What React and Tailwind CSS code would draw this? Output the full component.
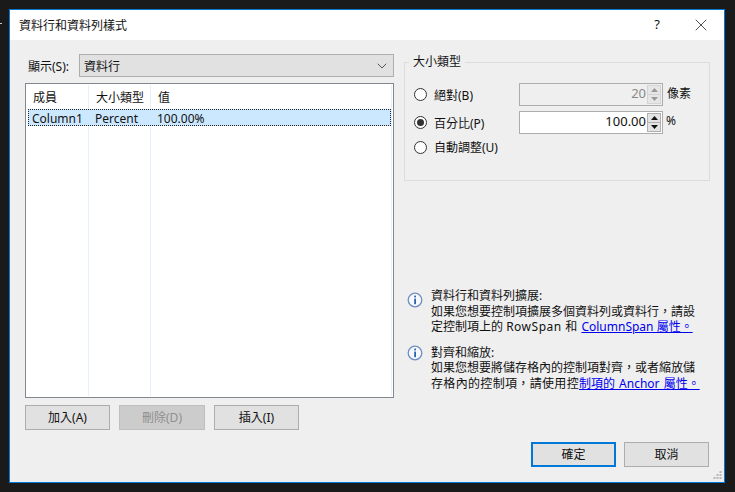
import { ChevronDown, X } from "lucide-react";

const font = {
  fontFamily: '"Noto Sans", "Noto Sans CJK TC", sans-serif',
};

function Radio({ label, checked }) {
  return (
    <div className="flex h-[20px] items-center gap-[7px]">
      <span className="flex h-[13px] w-[13px] items-center justify-center rounded-full border border-[#333] bg-white">
        {checked && <span className="h-[7px] w-[7px] rounded-full bg-[#333]" />}
      </span>
      <span className="translate-y-[1px]">{label}</span>
    </div>
  );
}

function Spin({ value, disabled }) {
  const arrow = disabled ? "#999" : "#111";
  const part = disabled
    ? "border-[#d4d4d4] bg-[#e6e6e6]"
    : "border-[#b0b0b0] bg-[#e3e3e3]";
  return (
    <div
      className={
        disabled
          ? "flex h-[23px] w-[144px] items-center justify-end border border-[#adadad] bg-[#efefef] pr-[1px] text-[#8a8a8a]"
          : "flex h-[23px] w-[144px] items-center justify-end border border-[#adadad] bg-white pr-[1px] text-[#111]"
      }
    >
      <span className="mr-[1px] -translate-y-[1px] text-[13px]">{value}</span>
      <div className="flex h-[19px] w-[14px] flex-col">
        <div className={`flex h-[10px] items-center justify-center border ${part}`}>
          <svg width="7" height="4" viewBox="0 0 7 4">
            <path d="M3.5 0 L7 4 H0 Z" fill={arrow} />
          </svg>
        </div>
        <div className={`flex h-[9px] items-center justify-center border border-t-0 ${part}`}>
          <svg width="7" height="4" viewBox="0 0 7 4">
            <path d="M0 0 H7 L3.5 4 Z" fill={arrow} />
          </svg>
        </div>
      </div>
    </div>
  );
}

function Btn({ children, disabled, primary, className = "" }) {
  let look = "border border-[#adadad] bg-[#e1e1e1] text-[#111]";
  if (disabled) look = "border border-[#bfbfbf] bg-[#cccccc] text-[#8f8f8f]";
  if (primary) look = "border-2 border-[#0078d7] bg-[#e1e1e1] text-[#111]";
  return (
    <button className={`flex h-[25px] items-center justify-center ${look} ${className}`}>
      {children}
    </button>
  );
}

function InfoIcon() {
  return (
    <svg width="16" height="16" viewBox="0 0 16 16" className="shrink-0">
      <circle cx="8" cy="8" r="6.8" fill="#f7f9fd" stroke="#6d8fc4" strokeWidth="1.3" />
      <rect x="7.2" y="3.6" width="1.8" height="1.8" fill="#2f62ad" />
      <rect x="7.2" y="6.6" width="1.8" height="5.6" fill="#2f62ad" />
    </svg>
  );
}

function Note({ title, iconClass, children }) {
  return (
    <div className="flex gap-[8px] pl-[3px]">
      <div className={iconClass}>
        <InfoIcon />
      </div>
      <div className="w-[272px] leading-[15.5px] text-[#111]">
        <div>{title}</div>
        {children}
      </div>
    </div>
  );
}

export default function App() {
  return (
    <div
      className="relative h-[492px] w-[735px] overflow-hidden bg-[#1a1a1a] pl-[9px] pt-[9px] text-[12px] text-[#111]"
      style={font}
    >
      <span className="absolute left-0 top-[23px] h-[1px] w-[2px] bg-[#cccccc]" />
      <div className="relative flex h-[474px] w-[716px] flex-col border border-[#0078d7] bg-[#efefef]">
        {/* title bar */}
        <div className="flex h-[30px] shrink-0 items-center bg-white pl-[9px]">
          <span className="flex-1 translate-y-[1px]">資料行和資料列樣式</span>
          <span className="mr-[31px] text-[13px]">?</span>
          <X size={20} strokeWidth={0.9} className="mr-[13px]" />
        </div>

        <div className="flex flex-1 gap-[10px] pb-[15px] pl-[15px] pt-[14px]">
          {/* left side */}
          <div className="flex w-[369px] flex-col">
            <div className="flex h-[23px] items-center pl-[3px]">
              <span className="w-[51px] translate-y-[1px]">顯示(S):</span>
              <div className="flex h-[23px] flex-1 items-center justify-between border border-[#adadad] bg-[#e1e1e1] pl-[4px] pr-[3px]">
                <span className="translate-y-[1px]">資料行</span>
                <ChevronDown size={16} strokeWidth={1} />
              </div>
            </div>

            <div className="mt-[6px] h-[315px] border border-[#828790] bg-white p-[1px]">
              <div className="flex h-full">
                <div className="flex w-[62px] flex-col border-r border-[#e6f0fb]">
                  <div className="flex h-[26px] items-center pl-[6px]">成員</div>
                </div>
                <div className="flex w-[62px] flex-col border-r border-[#e6f0fb]">
                  <div className="flex h-[26px] items-center pl-[7px]">大小類型</div>
                </div>
                <div className="flex-1 border-r border-[#e6f0fb]">
                  <div className="flex h-[26px] items-center pl-[7px]">值</div>
                </div>
              </div>
              <div className="relative -mt-[287px] ml-[1px] mr-[1px] flex h-[17px] items-center border border-dotted border-[#222] bg-[#cce8ff]">
                <span className="w-[60px] translate-y-[1px] pl-[3px]">Column1</span>
                <span className="w-[62px] translate-y-[1px] pl-[6px]">Percent</span>
                <span className="translate-y-[1px] pl-[6px]">100.00%</span>
              </div>
            </div>

            <div className="mt-[7px] flex">
              <Btn className="w-[85px]">加入(A)</Btn>
              <Btn disabled className="ml-[9px] w-[86px]">刪除(D)</Btn>
              <Btn className="ml-[9px] w-[85px]">插入(I)</Btn>
            </div>
          </div>

          {/* right side */}
          <div className="flex w-[306px] flex-col">
            <fieldset className="mt-[1px] h-[126px] border border-[#dcdcdc] pl-[9px] pr-[2px]">
              <legend className="-ml-[5px] px-[4px] leading-[14px]">大小類型</legend>
              <div className="mt-[14px] flex h-[23px] items-center">
                <div className="w-[105px]">
                  <Radio label="絕對(B)" />
                </div>
                <Spin value="20" disabled />
                <span className="ml-[4px] -translate-y-[1px]">像素</span>
              </div>
              <div className="mt-[5px] flex h-[23px] items-center">
                <div className="w-[105px]">
                  <Radio label="百分比(P)" checked />
                </div>
                <Spin value="100.00" />
                <span className="ml-[3px] -translate-y-[2px]">%</span>
              </div>
              <div className="mt-[3px]">
                <Radio label="自動調整(U)" />
              </div>
            </fieldset>

            <div className="mt-[107px] flex flex-col gap-[10px]">
              <Note title="資料行和資料列擴展:" iconClass="pt-[4px]">
                <div>如果您想要控制項擴展多個資料列或資料行，請設</div>
                <div>
                  定控制項上的 <span className="tracking-[0.5px]">RowSpan 和 </span>
                  <span className="text-[#0000ee] underline">ColumnSpan 屬性。</span>
                </div>
              </Note>
              <Note title="對齊和縮放:">
                <div>如果您想要將儲存格內的控制項對齊，或者縮放儲</div>
                <div>
                  <span className="tracking-[0.33px]">存格內的控制項，請使用控</span>
                  <span className="text-[#0000ee] underline [word-spacing:1px]">制項的 Anchor 屬性。</span>
                </div>
              </Note>
            </div>

            <div className="mt-auto flex justify-end gap-[8px] pr-[1px]">
              <Btn primary className="w-[85px]">確定</Btn>
              <Btn className="w-[85px]">取消</Btn>
            </div>
          </div>
        </div>

        {/* resize grip */}
        <svg width="9" height="9" viewBox="0 0 9 9" className="absolute bottom-[2px] right-[2px]">
          <g fill="#b8b8b8">
            <rect x="6.5" y="0" width="2" height="2" />
            <rect x="3.5" y="3" width="2" height="2" />
            <rect x="6.5" y="3" width="2" height="2" />
            <rect x="0.5" y="6" width="2" height="2" />
            <rect x="3.5" y="6" width="2" height="2" />
            <rect x="6.5" y="6" width="2" height="2" />
          </g>
        </svg>
      </div>
    </div>
  );
}
